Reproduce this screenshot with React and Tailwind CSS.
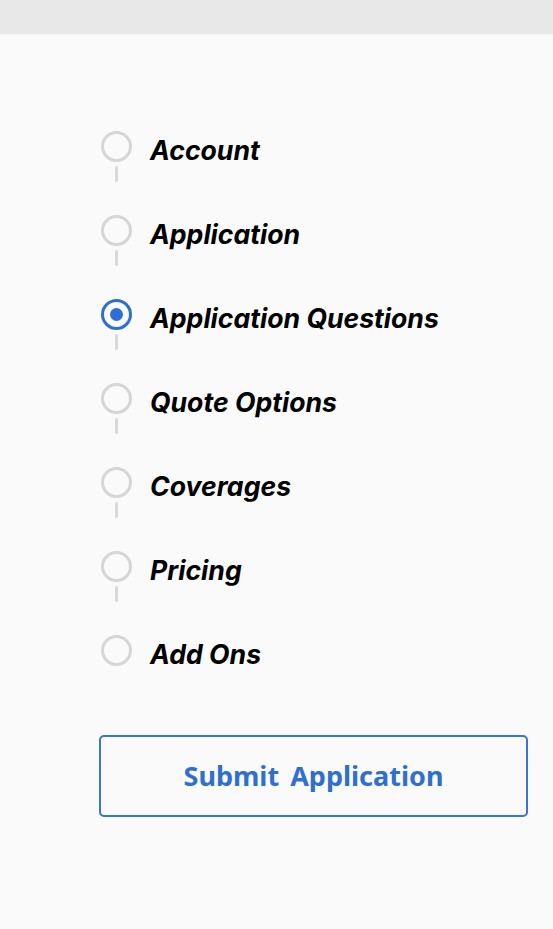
import React from "react";

const steps = [
  { label: "Account", active: false },
  { label: "Application", active: false },
  { label: "Application Questions", active: true },
  { label: "Quote Options", active: false },
  { label: "Coverages", active: false },
  { label: "Pricing", active: false },
  { label: "Add Ons", active: false },
];

export default function App() {
  return (
    <div className="min-h-[929px] w-full bg-[#fafafa]">
      <div className="h-[34px] w-full bg-[#e8e8e8]" />
      <div className="pl-[101px] pt-[97px]">
        <ul className="flex flex-col">
          {steps.map((s, i) => (
            <li key={s.label} className="flex flex-col">
              <div className="flex items-center h-[30px]">
                {s.active ? (
                  <span className="flex h-[31px] w-[31px] shrink-0 items-center justify-center rounded-full border-[3px] border-[#2f6fd3]">
                    <span className="h-[13px] w-[13px] rounded-full bg-[#2f6fd3]" />
                  </span>
                ) : (
                  <span className="h-[31px] w-[31px] shrink-0 rounded-full border-[3px] border-[#d6d6d6]" />
                )}
                <span
                  className="ml-[18px] mt-[8px] whitespace-nowrap text-[26.6px] leading-none font-bold italic text-black"
                  style={{ fontFamily: '"Inter", "Liberation Sans", sans-serif' }}
                >
                  {s.label}
                </span>
              </div>
              {i < steps.length - 1 && (
                <div className="h-[54px] pl-[14px] pt-[5px]">
                  <div className="h-[16px] w-[3px] rounded-full bg-[#d9d9d9]" />
                </div>
              )}
            </li>
          ))}
        </ul>
        <button
          className="mt-[70px] flex h-[82px] w-[429px] -ml-[2px] items-center justify-center rounded-[5px] border-2 border-[#3a76c9] bg-transparent text-[27px] font-bold text-[#2f6fd0]"
          style={{ fontFamily: '"Noto Sans", "Liberation Sans", sans-serif', wordSpacing: "4px" }}
        >
          Submit Application
        </button>
      </div>
    </div>
  );
}
